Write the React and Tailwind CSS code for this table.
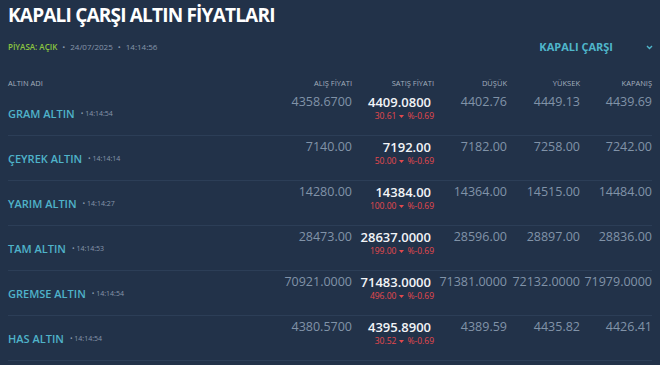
import React from "react";

const rows = [
  { name: "GRAM ALTIN", time: "14:14:54", alis: "4358.6700", satis: "4409.0800", ch: "30.61", pct: "%-0.69", low: "4402.76", high: "4449.13", close: "4439.69" },
  { name: "ÇEYREK ALTIN", time: "14:14:14", alis: "7140.00", satis: "7192.00", ch: "50.00", pct: "%-0.69", low: "7182.00", high: "7258.00", close: "7242.00" },
  { name: "YARIM ALTIN", time: "14:14:27", alis: "14280.00", satis: "14384.00", ch: "100.00", pct: "%-0.69", low: "14364.00", high: "14515.00", close: "14484.00" },
  { name: "TAM ALTIN", time: "14:14:53", alis: "28473.00", satis: "28637.0000", ch: "199.00", pct: "%-0.69", low: "28596.00", high: "28897.00", close: "28836.00" },
  { name: "GREMSE ALTIN", time: "14:14:54", alis: "70921.0000", satis: "71483.0000", ch: "496.00", pct: "%-0.69", low: "71381.0000", high: "72132.0000", close: "71979.0000" },
  { name: "HAS ALTIN", time: "14:14:54", alis: "4380.5700", satis: "4395.8900", ch: "30.52", pct: "%-0.69", low: "4389.59", high: "4435.82", close: "4426.41" },
];

const grid = "grid grid-cols-[1fr_82px_82px_73px_73px_72px]";

export default function App() {
  return (
    <div className="w-[660px] h-[365px] overflow-hidden bg-[#223249] px-2 font-['Open_Sans',sans-serif]">
      <h1 className="pt-[3px] text-[19px] leading-[24px] font-bold tracking-[-0.8px] text-white">KAPALI ÇARŞI ALTIN FİYATLARI</h1>
      <div className="mt-[12px] flex items-center justify-between h-[16px]">
        <div className="flex items-center text-[8px] leading-[12px]">
          <span className="font-semibold text-[#8cc63f]">PİYASA: AÇIK</span>
          <span className="mx-[5px] text-[#8796aa]">•</span>
          <span className="text-[#8796aa]">24/07/2025</span>
          <span className="mx-[5px] text-[#8796aa]">•</span>
          <span className="text-[#8796aa]">14:14:56</span>
        </div>
        <div className="flex items-center -mr-[1px]">
          <span className="text-[11px] font-bold text-[#4fb6cb]">KAPALI ÇARŞI</span>
          <svg className="ml-[33px]" width="7" height="5" viewBox="0 0 7 5">
            <path d="M1 1 L3.5 3.5 L6 1" stroke="#4fb6cb" strokeWidth="1.4" fill="none" />
          </svg>
        </div>
      </div>
      <div className={`${grid} mt-[21px] h-[14px] items-center text-[7.5px] leading-[10px] text-[#a3aebd]`}>
        <div>ALTIN ADI</div>
        <div className="text-right">ALIŞ FİYATI</div>
        <div className="text-right">SATIŞ FİYATI</div>
        <div className="text-right">DÜŞÜK</div>
        <div className="text-right">YÜKSEK</div>
        <div className="text-right">KAPANIŞ</div>
      </div>
      <div className="mt-[1px]">
        {rows.map((r) => (
          <div key={r.name} className={`${grid} h-[45px] border-b border-[#2c3e57]`}>
            <div className="flex items-center pt-[2px]">
              <span className="text-[11px] font-semibold text-[#4fb3c9]">{r.name}</span>
              <span className="ml-[6px] text-[7px] text-[#8796aa]">• {r.time}</span>
            </div>
            <div className="pt-[3px] text-right text-[12.5px] leading-[16px] text-[#8193a8]">{r.alis}</div>
            <div className="pt-[3px] text-right">
              <div className="pr-[3px] text-[13px] leading-[16px] font-semibold text-[#f2f4f7]">{r.satis}</div>
              <div className="text-[8.5px] leading-[12px] text-[#e5484d] flex justify-end items-center">
                <span>{r.ch}</span>
                <svg className="mx-[3px]" width="5" height="3" viewBox="0 0 5 3"><path d="M0 0 L5 0 L2.5 3 Z" fill="#e5484d" /></svg>
                <span>{r.pct}</span>
              </div>
            </div>
            <div className="pt-[3px] text-right text-[12.5px] leading-[16px] text-[#8193a8]">{r.low}</div>
            <div className="pt-[3px] text-right text-[12.5px] leading-[16px] text-[#8193a8]">{r.high}</div>
            <div className="pt-[3px] text-right text-[12.5px] leading-[16px] text-[#8193a8]">{r.close}</div>
          </div>
        ))}
      </div>
    </div>
  );
}
